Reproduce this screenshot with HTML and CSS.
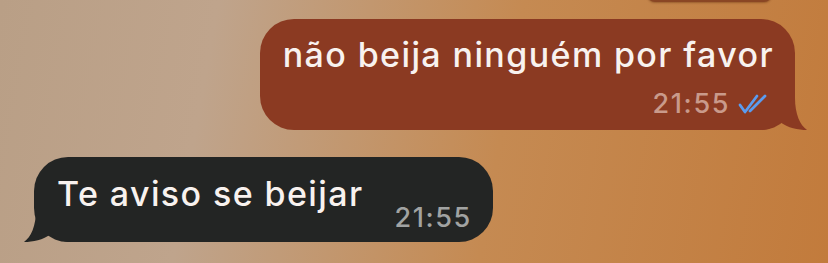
FILE: index.html
```html
<!DOCTYPE html>
<html lang="pt">
<head>
    <meta charset="UTF-8">
    <meta name="viewport" content="width=device-width, initial-scale=1.0">
    <title>Chat</title>
    <link rel="stylesheet" href="styles.css">
</head>
<body>
    <section class="chat">
        <div class="prev-bubble"></div>

        <div class="message outgoing">
            <p class="message-text">não beija ninguém por favor</p>
            <div class="message-meta">
                <span class="message-time">21:55</span>
                <svg class="checks" width="30" height="20" viewBox="0 0 30 20">
                    <path d="M2 11 L7 18 L19 2" />
                    <path d="M12 17 L27 2" />
                </svg>
            </div>
            <svg class="tail" width="50" height="46" viewBox="0 0 50 46">
                <path d="M0 0 L35 0 L35 14 C35 30 40 41 47 46 C38 46 28 44 20 38 C14 43 8 46 0 46 Z" />
            </svg>
        </div>

        <div class="message incoming">
            <p class="message-text">Te aviso se beijar</p>
            <span class="message-time">21:55</span>
            <svg class="tail" width="50" height="46" viewBox="0 0 50 46">
                <path d="M0 0 L35 0 L35 14 C35 30 40 41 47 46 C38 46 28 44 20 38 C14 43 8 46 0 46 Z" />
            </svg>
        </div>
    </section>
</body>
</html>
```

FILE: styles.css
```css
body {
    margin: 0;
    width: 828px;
    height: 263px;
    overflow: hidden;
    font-family: "Inter", "Liberation Sans", sans-serif;
    background: linear-gradient(100deg, #b99f86 0%, #bfa48c 25%, #c58a52 60%, #c27b3c 100%);
}
.chat {
    display: flex;
    flex-direction: column;
    position: relative;
    height: 263px;
}
.prev-bubble {
    position: absolute;
    top: -10px;
    left: 647px;
    width: 125px;
    height: 12px;
    border-radius: 0 0 8px 8px;
    background: #8a4624;
    box-shadow: 0 1px 2px rgba(90, 40, 10, 0.4);
}
.message {
    position: relative;
    box-sizing: border-box;
    color: #f8f2ef;
}
.message-text,
.message-meta,
.message-time {
    position: relative;
    z-index: 1;
}
.message-text {
    margin: 0;
    font-size: 34px;
    font-weight: 500;
    line-height: 38px;
    letter-spacing: 1.4px;
    white-space: nowrap;
}
.tail {
    position: absolute;
    bottom: 0;
    z-index: 0;
}
.outgoing {
    align-self: flex-end;
    margin-top: 19px;
    margin-right: 33px;
    height: 111px;
    padding: 17px 21px 0 23px;
    background: #8b3a22;
    border-radius: 34px;
}
.outgoing .tail {
    right: -15px;
    fill: #8b3a22;
}
.message-meta {
    display: flex;
    justify-content: flex-end;
    align-items: center;
    gap: 8px;
    margin-top: 16px;
    margin-right: 6px;
}
.message-time {
    font-size: 27px;
    font-weight: 500;
    line-height: 27px;
    letter-spacing: 1.6px;
    color: #c99a8b;
}
.checks {
    flex-shrink: 0;
    fill: none;
    stroke: #5a9cf0;
    stroke-width: 2.8;
    stroke-linecap: round;
    stroke-linejoin: round;
}
.incoming {
    align-self: flex-start;
    display: flex;
    align-items: flex-start;
    gap: 31px;
    margin-top: 27px;
    margin-left: 34px;
    height: 85px;
    padding: 18px 21px 0 23px;
    background: #232524;
    border-radius: 34px;
}
.incoming .message-time {
    color: #a1a3a2;
    margin-top: 29px;
}
.incoming .tail {
    left: -13px;
    fill: #232524;
    transform: scaleX(-1);
}
```
